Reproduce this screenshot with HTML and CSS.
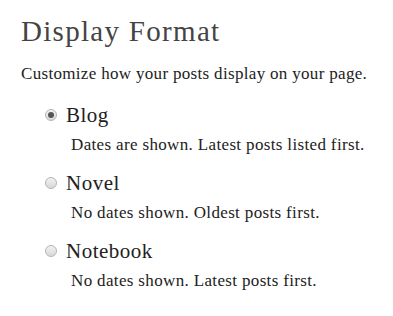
FILE: index.html
```html
<!DOCTYPE html>
<html lang="en">
<head>
    <meta charset="UTF-8">
    <meta name="viewport" content="width=device-width, initial-scale=1.0">
    <title>Display Format</title>
    <link rel="stylesheet" href="styles.css">
</head>
<body>

<div class="settings">
    <h1>Display Format</h1>
    <p class="intro">Customize how your posts display on your page.</p>
    <div class="options">
        <label class="option">
            <span class="option-row">
                <span class="radio checked"></span>
                <span class="option-name">Blog</span>
            </span>
            <span class="option-desc">Dates are shown. Latest posts listed first.</span>
        </label>
        <label class="option">
            <span class="option-row">
                <span class="radio"></span>
                <span class="option-name">Novel</span>
            </span>
            <span class="option-desc">No dates shown. Oldest posts first.</span>
        </label>
        <label class="option">
            <span class="option-row">
                <span class="radio"></span>
                <span class="option-name">Notebook</span>
            </span>
            <span class="option-desc">No dates shown. Latest posts first.</span>
        </label>
    </div>
</div>

</body>
</html>
```

FILE: styles.css
```css
body {
    font-family: "Liberation Serif", serif;
    background-color: #fff;
    color: #222;
    margin: 0;
    padding: 0;
}
.settings {
    padding: 13px 21px;
}
.settings h1 {
    font-size: 29px;
    font-weight: normal;
    letter-spacing: 1.3px;
    line-height: 36px;
    color: #444;
    margin: 0 0 15px;
}
.intro {
    font-size: 17px;
    letter-spacing: 0.32px;
    line-height: 20px;
    margin: 0 0 17px;
}
.options {
    margin-left: 24px;
}
.option {
    display: block;
    margin-bottom: 13px;
}
.option-row {
    display: flex;
    align-items: center;
    gap: 9px;
    height: 28px;
}
.option-name {
    font-size: 21px;
    letter-spacing: 0.5px;
    line-height: 28px;
}
.option-desc {
    display: block;
    font-size: 17px;
    letter-spacing: 0.35px;
    line-height: 22px;
    margin-top: 5px;
    padding-left: 26px;
}
.radio {
    box-sizing: border-box;
    width: 12px;
    height: 12px;
    border: 1px solid #b4b4b4;
    border-radius: 50%;
    background: linear-gradient(#f2f2f2, #d8d8d8);
    display: flex;
    align-items: center;
    justify-content: center;
    margin-top: -1px;
}
.radio.checked::after {
    content: "";
    width: 6px;
    height: 6px;
    border-radius: 50%;
    background-color: #555;
}
```
